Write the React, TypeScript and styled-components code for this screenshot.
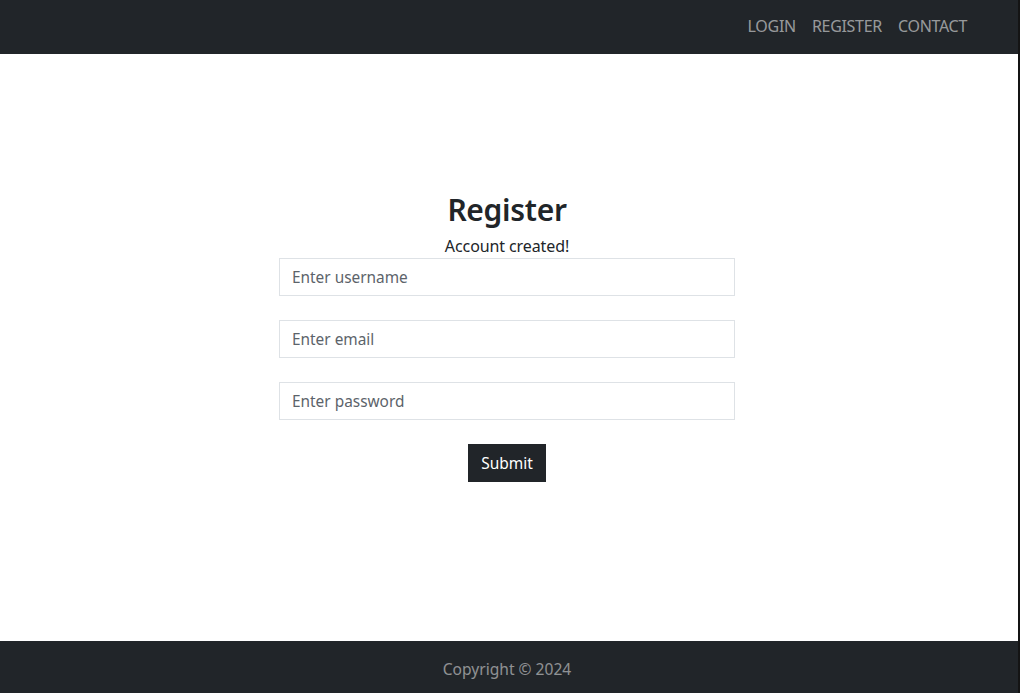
import React from 'react';
import styled, { createGlobalStyle } from 'styled-components';

const GlobalStyle = createGlobalStyle`
  html, body {
    margin: 0;
    padding: 0;
    height: 100%;
  }
  body {
    font-family: "Noto Sans", "Open Sans", sans-serif;
    font-size: 16px;
    color: #212529;
    background: #fff;
  }
  * {
    box-sizing: border-box;
  }
`;

const Page = styled.div`
  display: flex;
  flex-direction: column;
  height: 100vh;
  border-right: 2px solid #141414;
`;

const Navbar = styled.header`
  display: flex;
  align-items: center;
  justify-content: flex-end;
  height: 54px;
  padding: 0 43px 2px 0;
  background: #212529;
`;

const NavLink = styled.a`
  padding: 0 8px;
  color: rgba(255, 255, 255, 0.55);
  font-size: 16px;
  text-decoration: none;
  letter-spacing: -0.3px;
`;

const Main = styled.main`
  flex: 1;
  display: flex;
  flex-direction: column;
  align-items: center;
  padding: 137px 4px 0 0;
`;

const Title = styled.h2`
  margin: 0;
  font-size: 30px;
  font-weight: 600;
  line-height: 38px;
  letter-spacing: -0.3px;
`;

const Notice = styled.p`
  margin: 5px 0 0;
  font-size: 16px;
  line-height: 24px;
  letter-spacing: -0.1px;
`;

const Form = styled.form`
  display: flex;
  flex-direction: column;
  align-items: center;
  gap: 24px;
  width: 456px;
`;

const Input = styled.input`
  width: 100%;
  height: 38px;
  padding: 6px 12px;
  border: 1px solid #dee2e6;
  border-radius: 0;
  font-family: inherit;
  font-size: 15.4px;
  color: #212529;
  outline: none;

  &::placeholder {
    color: #5c636a;
  }
`;

const SubmitButton = styled.button`
  height: 38px;
  width: 78px;
  padding: 0;
  border: none;
  border-radius: 0;
  background: #212529;
  color: #fff;
  font-family: inherit;
  font-size: 15.5px;
`;

const Footer = styled.footer`
  display: flex;
  align-items: center;
  justify-content: center;
  height: 52px;
  padding: 3px 4px 0 0;
  background: #212529;
  color: rgba(255, 255, 255, 0.5);
  font-size: 15.6px;
`;

export default function App() {
  return (
    <>
      <GlobalStyle />
      <Page>
        <Navbar>
          <NavLink href="#">LOGIN</NavLink>
          <NavLink href="#">REGISTER</NavLink>
          <NavLink href="#">CONTACT</NavLink>
        </Navbar>
        <Main>
          <Title>Register</Title>
          <Notice>Account created!</Notice>
          <Form onSubmit={(e) => e.preventDefault()}>
            <Input type="text" placeholder="Enter username" />
            <Input type="email" placeholder="Enter email" />
            <Input type="password" placeholder="Enter password" />
            <SubmitButton type="submit">Submit</SubmitButton>
          </Form>
        </Main>
        <Footer>Copyright © 2024</Footer>
      </Page>
    </>
  );
}
